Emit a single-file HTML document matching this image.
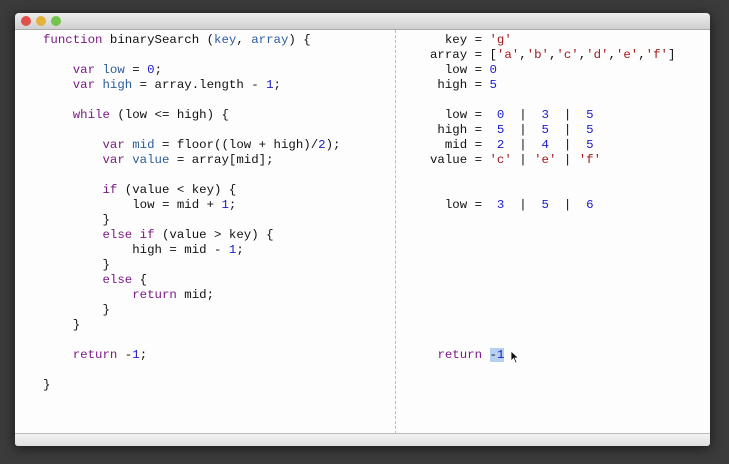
<!DOCTYPE html><html><head><style>
body{margin:0;width:729px;height:464px;background:#3b3b3b;overflow:hidden;font-family:"Liberation Mono",monospace}
.win{position:absolute;left:15px;top:13px;width:695px;height:433px;background:#fdfdfd;border-radius:4px 4px 3px 3px;overflow:hidden;box-shadow:0 2px 12px rgba(0,0,0,.6)}
.tb{height:16px;background:linear-gradient(#ececec,#d0d0d0);border-bottom:1px solid #aaa}
.dot{position:absolute;top:3px;width:10px;height:10px;border-radius:50%}
.bb{position:absolute;left:0;right:0;bottom:0;height:12px;background:linear-gradient(#f2f2f2,#e0e0e0);border-top:1px solid #bbb}
.div{position:absolute;left:380px;top:17px;height:404px;border-left:1px dashed #bbb}
pre{position:absolute;margin:0;font-size:12.4px;line-height:15px;color:#111;font-family:"Liberation Mono",monospace}
.k{color:#7c1a86}.v{color:#2b5d9c}.n{color:#1b1bcf}.s{color:#a31818}
.sel{background:#b6d0f0}
</style></head><body>
<div class="win"><div class="tb"></div>
<div class="dot" style="left:6px;background:#e0504a"></div><div class="dot" style="left:21px;background:#e3b23a"></div><div class="dot" style="left:36px;background:#72c44e"></div>
<div class="div"></div>
<pre style="left:28px;top:20px"><span class="k">function</span> binarySearch (<span class="v">key</span>, <span class="v">array</span>) {

    <span class="k">var</span> <span class="v">low</span> = <span class="n">0</span>;
    <span class="k">var</span> <span class="v">high</span> = array.length - <span class="n">1</span>;

    <span class="k">while</span> (low &lt;= high) {

        <span class="k">var</span> <span class="v">mid</span> = floor((low + high)/<span class="n">2</span>);
        <span class="k">var</span> <span class="v">value</span> = array[mid];

        <span class="k">if</span> (value &lt; key) {
            low = mid + <span class="n">1</span>;
        }
        <span class="k">else if</span> (value &gt; key) {
            high = mid - <span class="n">1</span>;
        }
        <span class="k">else</span> {
            <span class="k">return</span> mid;
        }
    }

    <span class="k">return</span> -<span class="n">1</span>;

}</pre>
<pre style="left:415px;top:20px">  key = <span class="s">'g'</span>
array = [<span class="s">'a'</span>,<span class="s">'b'</span>,<span class="s">'c'</span>,<span class="s">'d'</span>,<span class="s">'e'</span>,<span class="s">'f'</span>]
  low = <span class="n">0</span>
 high = <span class="n">5</span>

  low =  <span class="n">0</span>  |  <span class="n">3</span>  |  <span class="n">5</span>
 high =  <span class="n">5</span>  |  <span class="n">5</span>  |  <span class="n">5</span>
  mid =  <span class="n">2</span>  |  <span class="n">4</span>  |  <span class="n">5</span>
value = <span class="s">'c'</span> | <span class="s">'e'</span> | <span class="s">'f'</span>


  low =  <span class="n">3</span>  |  <span class="n">5</span>  |  <span class="n">6</span>









 <span class="k">return</span> <span class="sel">-<span class="n">1</span></span></pre>
<svg style="position:absolute;left:495px;top:337px" width="10" height="14"><path d="M1 1 L1 11 L3.5 8.5 L5.5 13 L7 12.3 L5 8 L8.5 8 Z" fill="#111" stroke="#fff" stroke-width=".8"/></svg>
<div class="bb"></div>
</div>
</body></html>
